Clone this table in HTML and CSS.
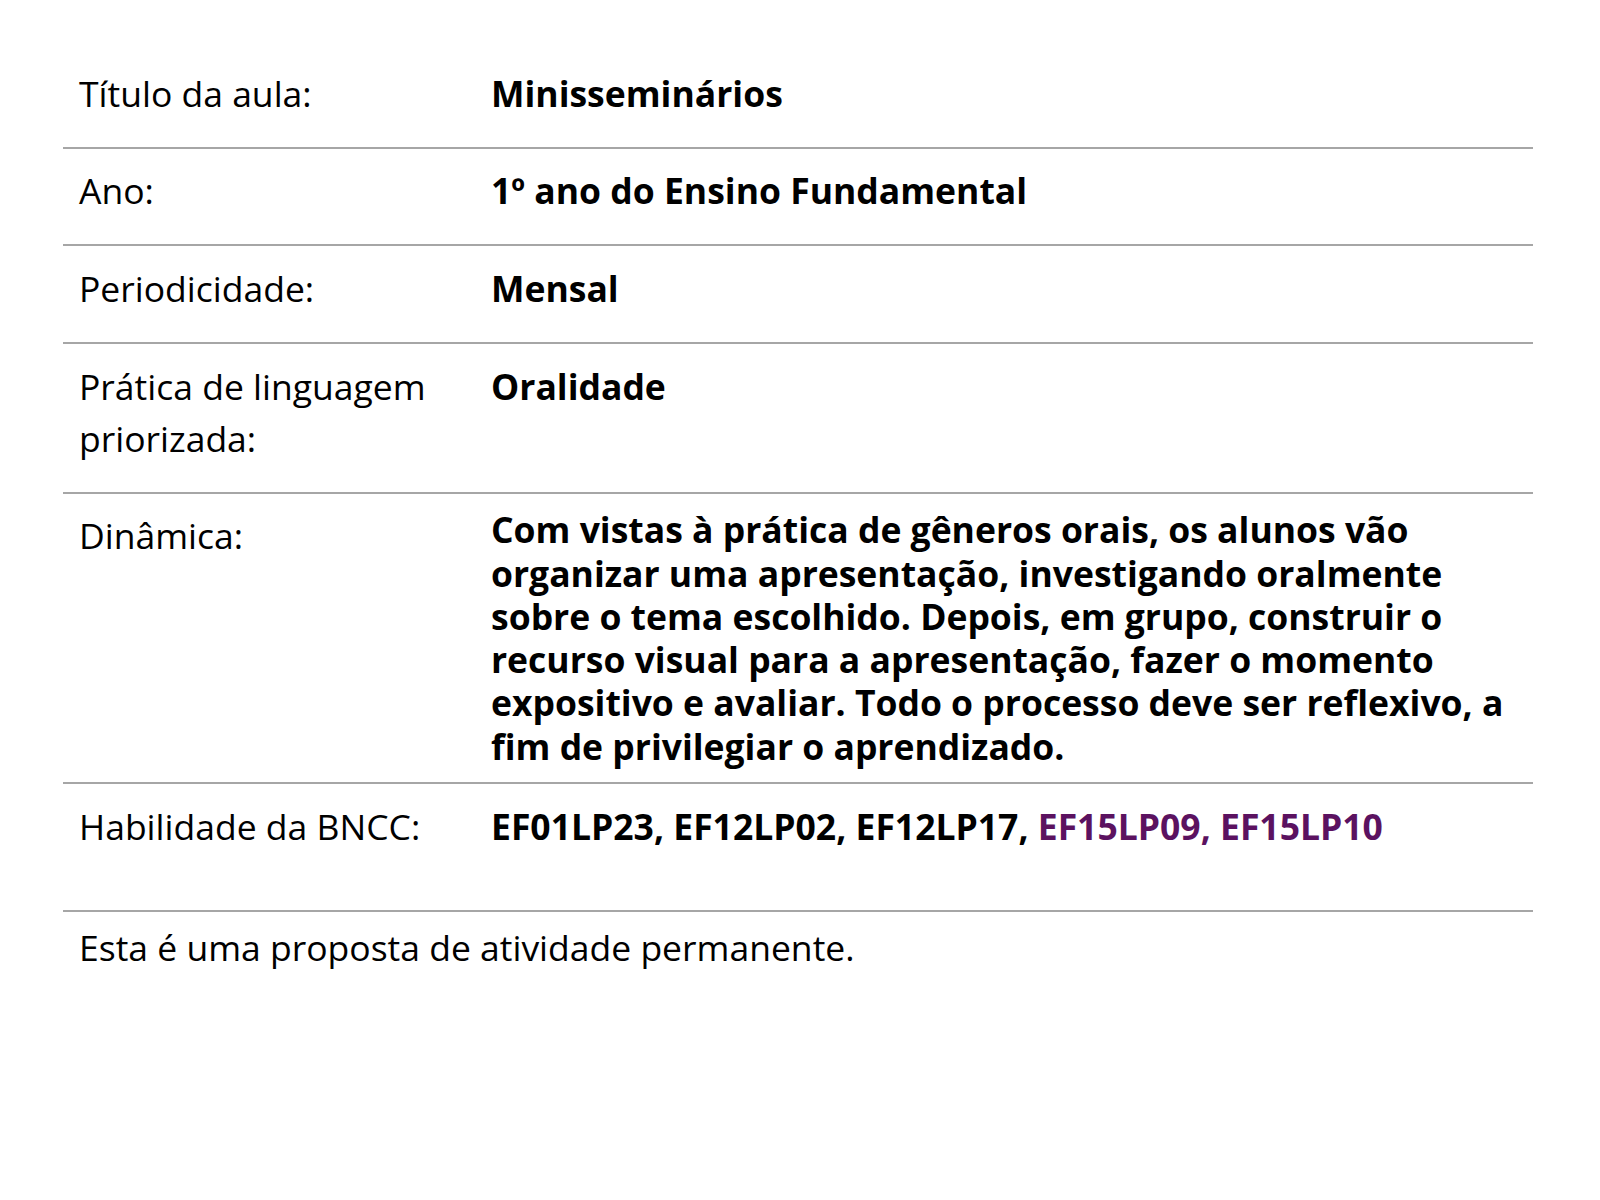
FILE: index.html
```html
<!DOCTYPE html>
<html lang="pt-BR">
<head>
<meta charset="utf-8">
<title>Minisseminários</title>
<link rel="stylesheet" href="styles.css">
</head>
<body>
<main class="page">
  <div class="sheet">
    <div class="row">
      <div class="label">Título da aula:</div>
      <div class="value">Minisseminários</div>
    </div>
    <div class="row">
      <div class="label">Ano:</div>
      <div class="value">1º ano do Ensino Fundamental</div>
    </div>
    <div class="row">
      <div class="label">Periodicidade:</div>
      <div class="value">Mensal</div>
    </div>
    <div class="row">
      <div class="label">Prática de linguagem priorizada:</div>
      <div class="value">Oralidade</div>
    </div>
    <div class="row">
      <div class="label">Dinâmica:</div>
      <div class="value value-para">Com vistas à prática de gêneros orais, os alunos vão organizar uma apresentação, investigando oralmente sobre o tema escolhido. Depois, em grupo, construir o recurso visual para a apresentação, fazer o momento expositivo e avaliar. Todo o processo deve ser reflexivo, a fim de privilegiar o aprendizado.</div>
    </div>
    <div class="row row-tall">
      <div class="label">Habilidade da BNCC:</div>
      <div class="value">EF01LP23, EF12LP02, EF12LP17, <span class="accent">EF15LP09, EF15LP10</span></div>
    </div>
    <p class="note">Esta é uma proposta de atividade permanente.</p>
  </div>
</main>
</body>
</html>
```
FILE: styles.css
```css
html, body {
  margin: 0;
  padding: 0;
  background: #ffffff;
}

body {
  font-family: "Open Sans", "Noto Sans", sans-serif;
  color: #000000;
}

.page {
  padding: 51px 67px 0 63px;
}

.sheet {
  width: 1470px;
}

.row {
  display: grid;
  grid-template-columns: 428px 1fr;
  align-items: start;
  padding: 15.5px 0 14.2px 0;
  border-bottom: 2px solid #a6a6a6;
}

.label {
  padding-left: 16px;
  font-size: 35.5px;
  line-height: 52px;
  margin-bottom: 14px;
  font-weight: 400;
}

.value {
  font-size: 35.5px;
  line-height: 52px;
  font-weight: 700;
}

.value-para {
  line-height: 43.27px;
  margin-top: -1px;
}

.row-tall {
  padding-bottom: 44.9px;
}

.accent {
  color: #5b1260;
}

.note {
  margin: 0;
  padding: 8.5px 0 0 16px;
  font-size: 35.5px;
  line-height: 52px;
}
```
